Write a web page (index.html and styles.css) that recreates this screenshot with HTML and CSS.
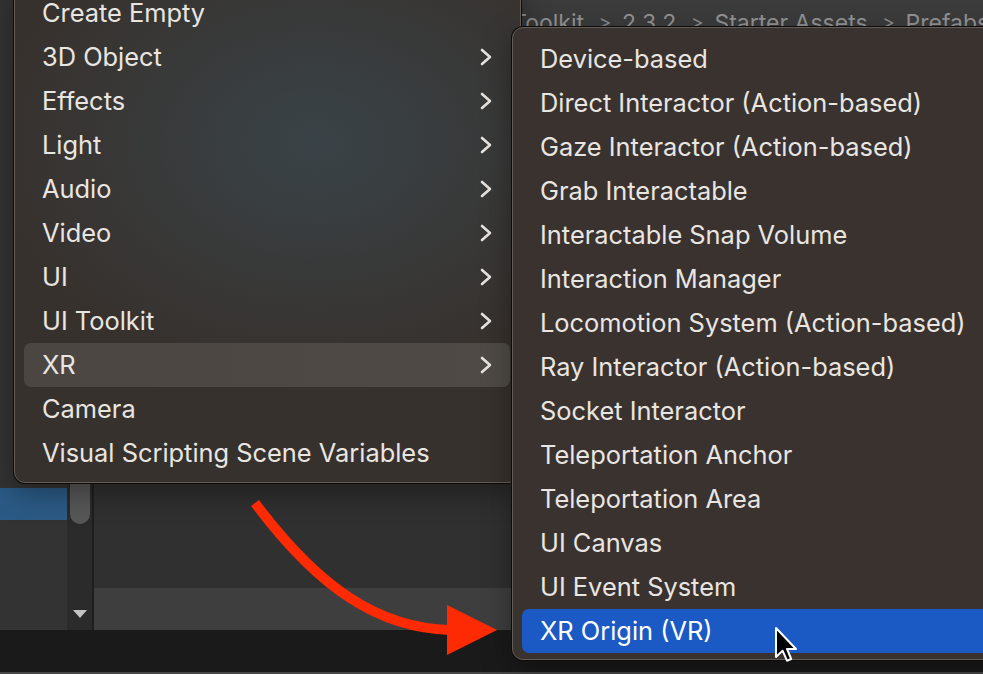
FILE: index.html
```html
<!DOCTYPE html>
<html>
<head>
<meta charset="utf-8">
<title>Create menu</title>
<link rel="stylesheet" href="styles.css">
</head>
<body>
<div class="editor">
  <div class="workspace">
    <div class="hierarchy">
      <div class="hier-list"><div class="hier-row selected"></div></div>
      <div class="scrollbar">
        <div class="thumb"></div>
        <div class="scroll-down"></div>
      </div>
    </div>
    <div class="project">
      <div class="breadcrumbs">
        <span class="crumb">XR Interaction Toolkit</span><span class="sep">&gt;</span><span class="crumb">2.3.2</span><span class="sep">&gt;</span><span class="crumb">Starter Assets</span><span class="sep">&gt;</span><span class="crumb">Prefabs</span>
      </div>
      <div class="project-body"></div>
      <div class="project-footer"></div>
    </div>
  </div>
  <div class="statusbar"></div>
</div>

<div class="menu main-menu">
  <div class="item">Create Empty</div>
  <div class="item sub">3D Object<svg class="chev" viewBox="0 0 12 18"><polyline points="2,2 10,9 2,16"/></svg></div>
  <div class="item sub">Effects<svg class="chev" viewBox="0 0 12 18"><polyline points="2,2 10,9 2,16"/></svg></div>
  <div class="item sub">Light<svg class="chev" viewBox="0 0 12 18"><polyline points="2,2 10,9 2,16"/></svg></div>
  <div class="item sub">Audio<svg class="chev" viewBox="0 0 12 18"><polyline points="2,2 10,9 2,16"/></svg></div>
  <div class="item sub">Video<svg class="chev" viewBox="0 0 12 18"><polyline points="2,2 10,9 2,16"/></svg></div>
  <div class="item sub">UI<svg class="chev" viewBox="0 0 12 18"><polyline points="2,2 10,9 2,16"/></svg></div>
  <div class="item sub">UI Toolkit<svg class="chev" viewBox="0 0 12 18"><polyline points="2,2 10,9 2,16"/></svg></div>
  <div class="item sub open">XR<svg class="chev" viewBox="0 0 12 18"><polyline points="2,2 10,9 2,16"/></svg></div>
  <div class="item">Camera</div>
  <div class="item">Visual Scripting Scene Variables</div>
</div>

<div class="menu sub-menu">
  <div class="item">Device-based</div>
  <div class="item">Direct Interactor (Action-based)</div>
  <div class="item">Gaze Interactor (Action-based)</div>
  <div class="item">Grab Interactable</div>
  <div class="item">Interactable Snap Volume</div>
  <div class="item">Interaction Manager</div>
  <div class="item">Locomotion System (Action-based)</div>
  <div class="item">Ray Interactor (Action-based)</div>
  <div class="item">Socket Interactor</div>
  <div class="item">Teleportation Anchor</div>
  <div class="item">Teleportation Area</div>
  <div class="item">UI Canvas</div>
  <div class="item">UI Event System</div>
  <div class="item active">XR Origin (VR)</div>
</div>

<svg class="annotation" width="983" height="674" viewBox="0 0 983 674">
  <path d="M255,503 C320,590 380,628 450,630" fill="none" stroke="#fe2a04" stroke-width="10"/>
  <polygon points="447,605 497,630 447,655" fill="#fe2a04"/>
</svg>

<svg class="cursor" width="24" height="36" viewBox="-2 -2 24 36">
  <path d="M0,0 L0,29 L6.6,22.6 L11,32.7 L15.2,31 L11,21 L20,21 Z" fill="#000" stroke="#fff" stroke-width="2" stroke-linejoin="round"/>
</svg>
</body>
</html>
```

FILE: styles.css
```css
* { box-sizing: border-box; }

html, body {
  margin: 0;
  padding: 0;
  width: 983px;
  height: 674px;
  overflow: hidden;
  background: #323232;
  font-family: Inter, "Noto Sans", sans-serif;
}

.editor {
  display: flex;
  flex-direction: column;
  height: 674px;
}

.workspace {
  display: flex;
  height: 630px;
}

.hierarchy {
  display: flex;
  width: 94px;
  border-right: 2px solid #1e1e1e;
}

.hier-list {
  width: 67px;
  background: #333333;
  padding-top: 488px;
}

.hier-row {
  height: 32px;
}

.hier-row.selected {
  background: linear-gradient(90deg, #2a5a85, #2c5b86);
}

.scrollbar {
  width: 25px;
  background: #2b2b2b;
  display: flex;
  flex-direction: column;
  align-items: center;
  padding-top: 440px;
}

.thumb {
  width: 20px;
  height: 84px;
  background: #575757;
  border-radius: 10px;
}

.scroll-down {
  margin-top: auto;
  margin-bottom: 12px;
  width: 0;
  height: 0;
  border-left: 7px solid transparent;
  border-right: 7px solid transparent;
  border-top: 8px solid #c4c4c4;
}

.project {
  flex: 1;
  display: flex;
  flex-direction: column;
  background: #303030;
}

.breadcrumbs {
  height: 40px;
  background: #3b3b3b;
  color: #929292;
  font-size: 23px;
  line-height: 40px;
  padding-left: 259px;
  padding-top: 3px;
  white-space: nowrap;
  overflow: hidden;
  display: flex;
}

.sep {
  width: 38px;
  flex: none;
  text-align: center;
  padding-left: 4px;
  font-size: 19px;
  color: #8a8a8a;
}

.project-body {
  flex: 1;
}

.project-footer {
  height: 42px;
  background: #3e3e3e;
}

.statusbar {
  height: 44px;
  background: #1a1a1a;
  border-bottom: 2px solid #474747;
}

/* Menus */
.menu {
  position: absolute;
  border: 1px solid #625d59;
  box-shadow: 0 0 0 1px #0d0c0b, 0 10px 30px rgba(0,0,0,0.35);
  color: #e9e6e2;
  font-size: 25.4px;
}

.main-menu {
  left: 14px;
  top: -18px;
  width: 507px;
  padding: 8px 10px 7px 9px;
  border-radius: 11px;
  background:
    radial-gradient(ellipse 320px 240px at 300px 160px, rgba(58,70,76,0.85), rgba(58,70,76,0) 100%),
    #37312d;
}

.sub-menu {
  left: 512px;
  top: 27px;
  width: 520px;
  padding: 9px 0 6px 9px;
  border-radius: 11px;
  background: #39322f;
}

.item {
  height: 44px;
  line-height: 44px;
  padding-left: 18px;
  padding-right: 18px;
  display: flex;
  align-items: center;
  justify-content: space-between;
  white-space: nowrap;
  border-radius: 7px;
}

.item.open {
  background: linear-gradient(90deg, #4b4642, #4f4a46);
}

.item.active {
  background: #1b5ac4;
  color: #ffffff;
  border-radius: 7px 0 0 7px;
}

.chev {
  width: 12px;
  height: 18px;
  fill: none;
  stroke: #e7e4e0;
  stroke-width: 2.6;
  stroke-linecap: round;
  stroke-linejoin: round;
}

.annotation {
  position: absolute;
  left: 0;
  top: 0;
  pointer-events: none;
}

.cursor {
  position: absolute;
  left: 774px;
  top: 626px;
}
```
